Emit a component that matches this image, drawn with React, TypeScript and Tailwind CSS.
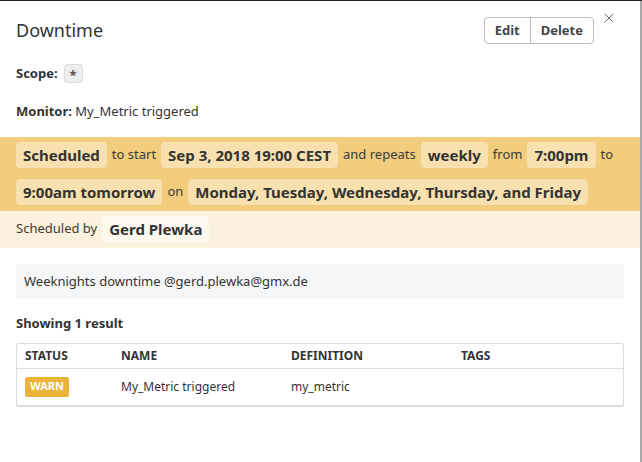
import { X } from 'lucide-react'

function Pill({ children, light }: { children: React.ReactNode; light?: boolean }) {
  return (
    <span
      className={`inline-flex h-[26px] items-center rounded-[4px] px-[7px] text-[15px] font-bold text-[#333] ${
        light ? 'bg-[#fdf8ee]' : 'bg-[#f8e1ae]'
      }`}
    >
      {children}
    </span>
  )
}

function Word({ children }: { children: React.ReactNode }) {
  return <span className="text-[13px] text-[#3a3a3a]">{children}</span>
}

export default function App() {
  return (
    <div
      className="flex h-[462px] w-[642px] flex-col overflow-hidden bg-white text-[#333]"
      style={{ fontFamily: '"Noto Sans", "Open Sans", sans-serif' }}
    >
      <div className="h-px w-full bg-[#1f2b31]" />
      <div className="flex flex-1">
        <div className="relative w-[640px] bg-white">
          <button className="absolute top-[9px] right-[23px] text-[#666]">
            <X size={16} strokeWidth={1.4} />
          </button>

          <div className="flex items-center justify-between pt-[16px] pr-[46px] pl-[16px]">
            <h1 className="text-[18px] text-[#333]">Downtime</h1>
            <div className="flex h-[27px] overflow-hidden rounded-[4px] border border-[#bbb] text-[13px] font-bold text-[#444]">
              <span className="flex items-center border-r border-[#bbb] px-[10px]">Edit</span>
              <span className="flex items-center px-[10px]">Delete</span>
            </div>
          </div>

          <div className="mt-[20px] flex items-center gap-[6px] px-[16px]">
            <span className="text-[13px] font-bold">Scope:</span>
            <span className="flex h-[19px] w-[19px] items-center justify-center rounded-[3px] border border-[#ddd] bg-[#eee] pt-[3px] text-[13px] font-bold text-[#555]">
              *
            </span>
          </div>

          <div className="mt-[18px] px-[16px] text-[13px]">
            <span className="font-bold">Monitor:</span> My_Metric triggered
          </div>

          <div className="mt-[16px] flex flex-wrap items-center gap-x-[5px] gap-y-[11px] bg-[#f1cd7d] px-[16px] pt-[5px] pb-[6px]">
            <Pill>Scheduled</Pill>
            <Word>to start</Word>
            <Pill>Sep 3, 2018 19:00 CEST</Pill>
            <Word>and repeats</Word>
            <Pill>weekly</Pill>
            <Word>from</Word>
            <Pill>7:00pm</Pill>
            <Word>to</Word>
            <Pill>9:00am tomorrow</Pill>
            <Word>on</Word>
            <Pill>Monday, Tuesday, Wednesday, Thursday, and Friday</Pill>
          </div>

          <div className="flex items-center gap-[5px] bg-[#fbf1de] px-[16px] pt-[5px] pb-[6px]">
            <Word>Scheduled by</Word>
            <Pill light>Gerd Plewka</Pill>
          </div>

          <div className="mx-[16px] mt-[16px] flex h-[35px] items-center rounded-[3px] bg-[#f5f6f8] px-[8px] text-[13px]">
            Weeknights downtime @gerd.plewka@gmx.de
          </div>

          <div className="mt-[15px] px-[16px] text-[13px] font-bold">Showing 1 result</div>

          <div className="mx-[16px] mt-[9px] rounded-[3px] border border-[#ddd] border-b-[2px] border-b-[#dcdce0]">
            <div className="grid h-[25px] grid-cols-[96px_170px_170px_1fr] items-center border-b border-[#ddd] pl-[8px] text-[12px] font-bold text-[#333]">
              <span>STATUS</span>
              <span>NAME</span>
              <span>DEFINITION</span>
              <span>TAGS</span>
            </div>
            <div className="grid h-[36px] grid-cols-[96px_170px_170px_1fr] items-center pl-[8px] text-[12px]">
              <span>
                <span className="inline-flex h-[20px] items-center rounded-[2px] bg-[#eab43a] px-[5px] text-[11px] font-bold text-white">
                  WARN
                </span>
              </span>
              <span>My_Metric triggered</span>
              <span>my_metric</span>
              <span />
            </div>
          </div>
        </div>
        <div className="w-[2px] bg-[#a9a9a9]" />
      </div>
    </div>
  )
}
